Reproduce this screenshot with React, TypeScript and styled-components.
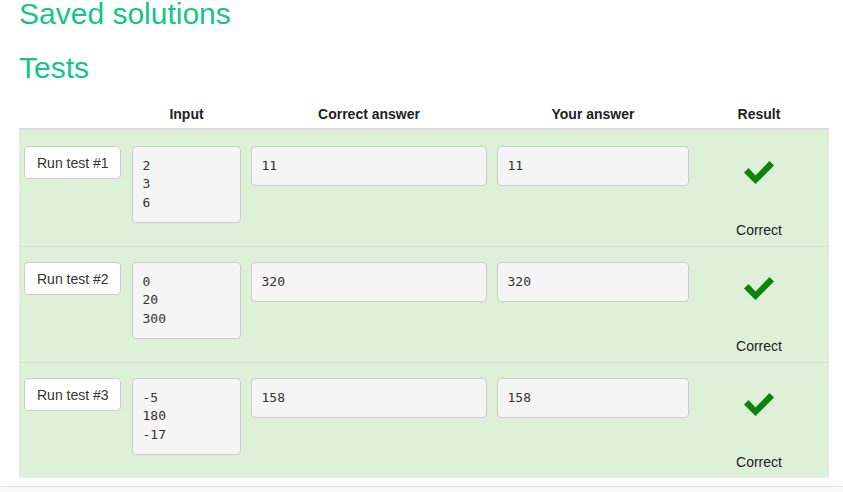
import React from "react";
import styled, { createGlobalStyle } from "styled-components";

const Global = createGlobalStyle`
  html, body { margin: 0; padding: 0; background: #fff; }
  body { font-family: "Liberation Sans", Arial, Helvetica, sans-serif; color: #333; font-size: 14px; overflow: hidden; }
`;

const Page = styled.div`
  width: 843px;
  height: 492px;
  overflow: hidden;
  display: flex;
  flex-direction: column;
`;

const Content = styled.div`
  padding: 0 14px 0 19px;
`;

const Title = styled.h2<{ $mb: number }>`
  margin: 0 0 ${(p) => p.$mb}px 0;
  font-family: "Liberation Sans", Arial, sans-serif;
  font-size: 30px;
  font-weight: 400;
  line-height: 27px;
  color: #13c58b;
`;

const COLS = "108px 119px 246px 202px 135px";

const HeadRow = styled.div`
  display: grid;
  grid-template-columns: ${COLS};
  height: 32px;
  box-sizing: border-box;
  border-bottom: 2px solid #ddd;
`;

const HeadCell = styled.div<{ $pr?: number }>`
  display: flex;
  align-items: flex-end;
  justify-content: center;
  padding: 0 ${(p) => p.$pr ?? 5}px 4px 5px;
  font-weight: 700;
  font-size: 14px;
  line-height: 20px;
  color: #222;
`;

const Row = styled.div<{ $first?: boolean }>`
  display: grid;
  grid-template-columns: ${COLS};
  height: 116px;
  box-sizing: border-box;
  background: #dff0d8;
  border-top: 1px solid ${(p) => (p.$first ? "#dff0d8" : "#ddd")};
  padding-top: 15px;
`;

const Cell = styled.div`
  padding: 0 5px;
  min-width: 0;
`;

const RunButton = styled.button`
  width: 97px;
  height: 33px;
  box-sizing: border-box;
  padding: 0 12px;
  background: #fff;
  border: 1px solid #ccc;
  border-radius: 4px;
  font-family: "Liberation Sans", Arial, sans-serif;
  font-size: 14px;
  color: #333;
  white-space: nowrap;
  cursor: pointer;
`;

const Pre = styled.pre`
  margin: 0;
  padding: 9.5px;
  background: #f5f5f5;
  border: 1px solid #ccc;
  border-radius: 4px;
  font-family: "DejaVu Sans Mono", Menlo, monospace;
  font-size: 13px;
  line-height: 18.57px;
  color: #333;
  white-space: pre;
  overflow: hidden;
`;

const ResultCell = styled.div`
  display: flex;
  flex-direction: column;
  align-items: center;
  padding-right: 5px;
`;

const CheckIcon = styled.svg`
  margin-top: 14px;
  display: block;
`;

const ResultText = styled.div`
  margin-top: 35px;
  font-size: 14px;
  line-height: 20px;
  color: #222;
`;

const Footer = styled.div`
  margin-top: 8px;
  flex: 1;
  background: #f8f8f8;
  border-top: 1px solid #e3e3e3;
  box-shadow: 0 -3px 6px rgba(0, 0, 0, 0.04);
`;

const Check = () => (
  <CheckIcon width="31" height="25" viewBox="0 0 31 25">
    <polygon
      points="0,12.5 4.5,8 11.5,15.5 25.5,1 30,5.5 11.5,24"
      fill="#0a850a"
    />
  </CheckIcon>
);

const tests = [
  { n: 1, input: "2\n3\n6", correct: "11", yours: "11" },
  { n: 2, input: "0\n20\n300", correct: "320", yours: "320" },
  { n: 3, input: "-5\n180\n-17", correct: "158", yours: "158" },
];

export default function App() {
  return (
    <Page>
      <Global />
      <Content>
        <Title $mb={27}>Saved solutions</Title>
        <Title $mb={17}>Tests</Title>
        <HeadRow>
          <HeadCell />
          <HeadCell>Input</HeadCell>
          <HeadCell>Correct answer</HeadCell>
          <HeadCell>Your answer</HeadCell>
          <HeadCell $pr={10}>Result</HeadCell>
        </HeadRow>
        {tests.map((t, i) => (
          <Row key={t.n} $first={i === 0}>
            <Cell>
              <RunButton>Run test #{t.n}</RunButton>
            </Cell>
            <Cell>
              <Pre>{t.input}</Pre>
            </Cell>
            <Cell>
              <Pre>{t.correct}</Pre>
            </Cell>
            <Cell>
              <Pre>{t.yours}</Pre>
            </Cell>
            <ResultCell>
              <Check />
              <ResultText>Correct</ResultText>
            </ResultCell>
          </Row>
        ))}
      </Content>
      <Footer />
    </Page>
  );
}
